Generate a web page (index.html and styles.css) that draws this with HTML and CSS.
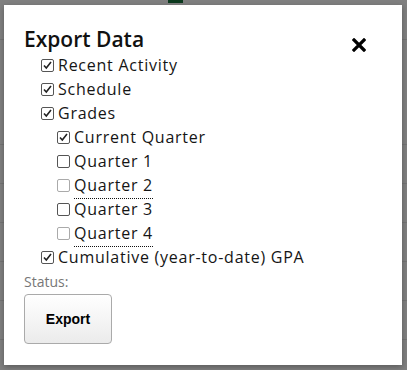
FILE: index.html
```html
<html>

<head>

    <meta name="viewport" content="width=device-width, initial-scale=1.0">

    <title>Export Data</title>

    <link rel="stylesheet" href="styles.css">

</head>

<body>

    <div class="page">
        <div class="topMark"></div>
        <div class="row r1"></div>
        <div class="row r2"></div>
        <div class="row"></div>
        <div class="row"></div>
        <div class="row"></div>
        <div class="row"></div>
        <div class="row"></div>
        <div class="footText"><span class="c1">mm</span> <span class="c2">ST</span></div>
    </div>

    <div class="modal">

        <div class="header">
            <h2>Export Data</h2>
            <span class="close">
                <svg width="14" height="14" viewBox="0 0 14 14">
                    <path d="M2 2 L12 12 M12 2 L2 12" stroke="#000" stroke-width="3.2" stroke-linecap="square"/>
                </svg>
            </span>
        </div>

        <ul class="options">
            <li><label><input type="checkbox" checked><span>Recent Activity</span></label></li>
            <li><label><input type="checkbox" checked><span>Schedule</span></label></li>
            <li><label><input type="checkbox" checked><span>Grades</span></label>
                <ul class="sub">
                    <li><label><input type="checkbox" checked><span>Current Quarter</span></label></li>
                    <li><label><input type="checkbox"><span>Quarter 1</span></label></li>
                    <li><label><input type="checkbox" disabled><span><abbr title="No data yet">Quarter 2</abbr></span></label></li>
                    <li><label><input type="checkbox"><span>Quarter 3</span></label></li>
                    <li><label><input type="checkbox" disabled><span><abbr title="No data yet">Quarter 4</abbr></span></label></li>
                </ul>
            </li>
            <li><label><input type="checkbox" checked><span>Cumulative (year-to-date) GPA</span></label></li>
        </ul>

        <div class="status">Status:</div>

        <button id="exportBtn">Export</button>

    </div>

</body>

</html>
```

FILE: styles.css
```css
body {
    margin: 0;
    padding: 0;
    background-color: #808080;
    font-family: "Open Sans", sans-serif;
    color: #151515;
    width: 407px;
    height: 370px;
    overflow: hidden;
    position: relative;
}

.topMark {
    margin-left: 168px;
    width: 15px;
    height: 3px;
    background-color: #0c3a1e;
}

.row {
    height: 38px;
    border-bottom: 1px solid #747474;
}

.r1 {
    height: 36px;
}

.r2 {
    height: 104px;
}

.footText {
    margin-left: 134px;
    margin-top: 4px;
    font-weight: bold;
    font-size: 16px;
    line-height: 20px;
}

.c1 {
    color: #8a2a10;
}

.c2 {
    color: #1a1a7a;
}

.modal {
    position: absolute;
    left: 4px;
    top: 5px;
    width: 398px;
    height: 360px;
    box-sizing: border-box;
    background-color: #ffffff;
    padding: 20px 20px 0 20px;
    box-shadow: 0 2px 6px rgba(0, 0, 0, 0.3);
}

.header {
    display: flex;
    justify-content: space-between;
    align-items: flex-start;
}

h2 {
    margin: 0;
    font-size: 21px;
    font-weight: 600;
    line-height: 28px;
    color: #111;
}

.close {
    margin-top: 13px;
    margin-right: 16px;
    width: 14px;
    height: 14px;
    display: block;
}

.close svg {
    display: block;
}

.options {
    list-style: none;
    margin: 0;
    padding: 0 0 0 17px;
    font-size: 16px;
    line-height: 24px;
    letter-spacing: 0.75px;
}

.sub {
    list-style: none;
    margin: 0;
    padding: 0 0 0 16px;
}

label {
    display: flex;
    align-items: center;
    height: 24px;
}

input[type="checkbox"] {
    appearance: none;
    -webkit-appearance: none;
    width: 13px;
    height: 13px;
    margin: 0 4px 0 0;
    border: 1px solid #555;
    border-radius: 2px;
    background-color: #fff;
    box-sizing: border-box;
    flex-shrink: 0;
}

input[type="checkbox"]:checked {
    background-image: url("data:image/svg+xml;utf8,<svg xmlns='http://www.w3.org/2000/svg' viewBox='0 0 11 11'><path d='M2 5.5 L4.3 8 L9 2' fill='none' stroke='%23222' stroke-width='1.6'/></svg>");
    background-size: 11px 11px;
}

input[type="checkbox"]:disabled {
    border-color: #aaa;
}

abbr {
    text-decoration: none;
    border-bottom: 1px dotted #111;
    padding-bottom: 2px;
}

.status {
    margin-top: 4px;
    font-size: 14px;
    color: #777;
    line-height: 18px;
}

button {
    margin-top: 3px;
    width: 88px;
    height: 50px;
    border: 1px solid #aaa;
    border-radius: 4px;
    background: linear-gradient(#ffffff, #ebebeb);
    font-family: "Liberation Sans", Arial, sans-serif;
    font-weight: bold;
    font-size: 14px;
    color: #000;
    cursor: pointer;
}
```
